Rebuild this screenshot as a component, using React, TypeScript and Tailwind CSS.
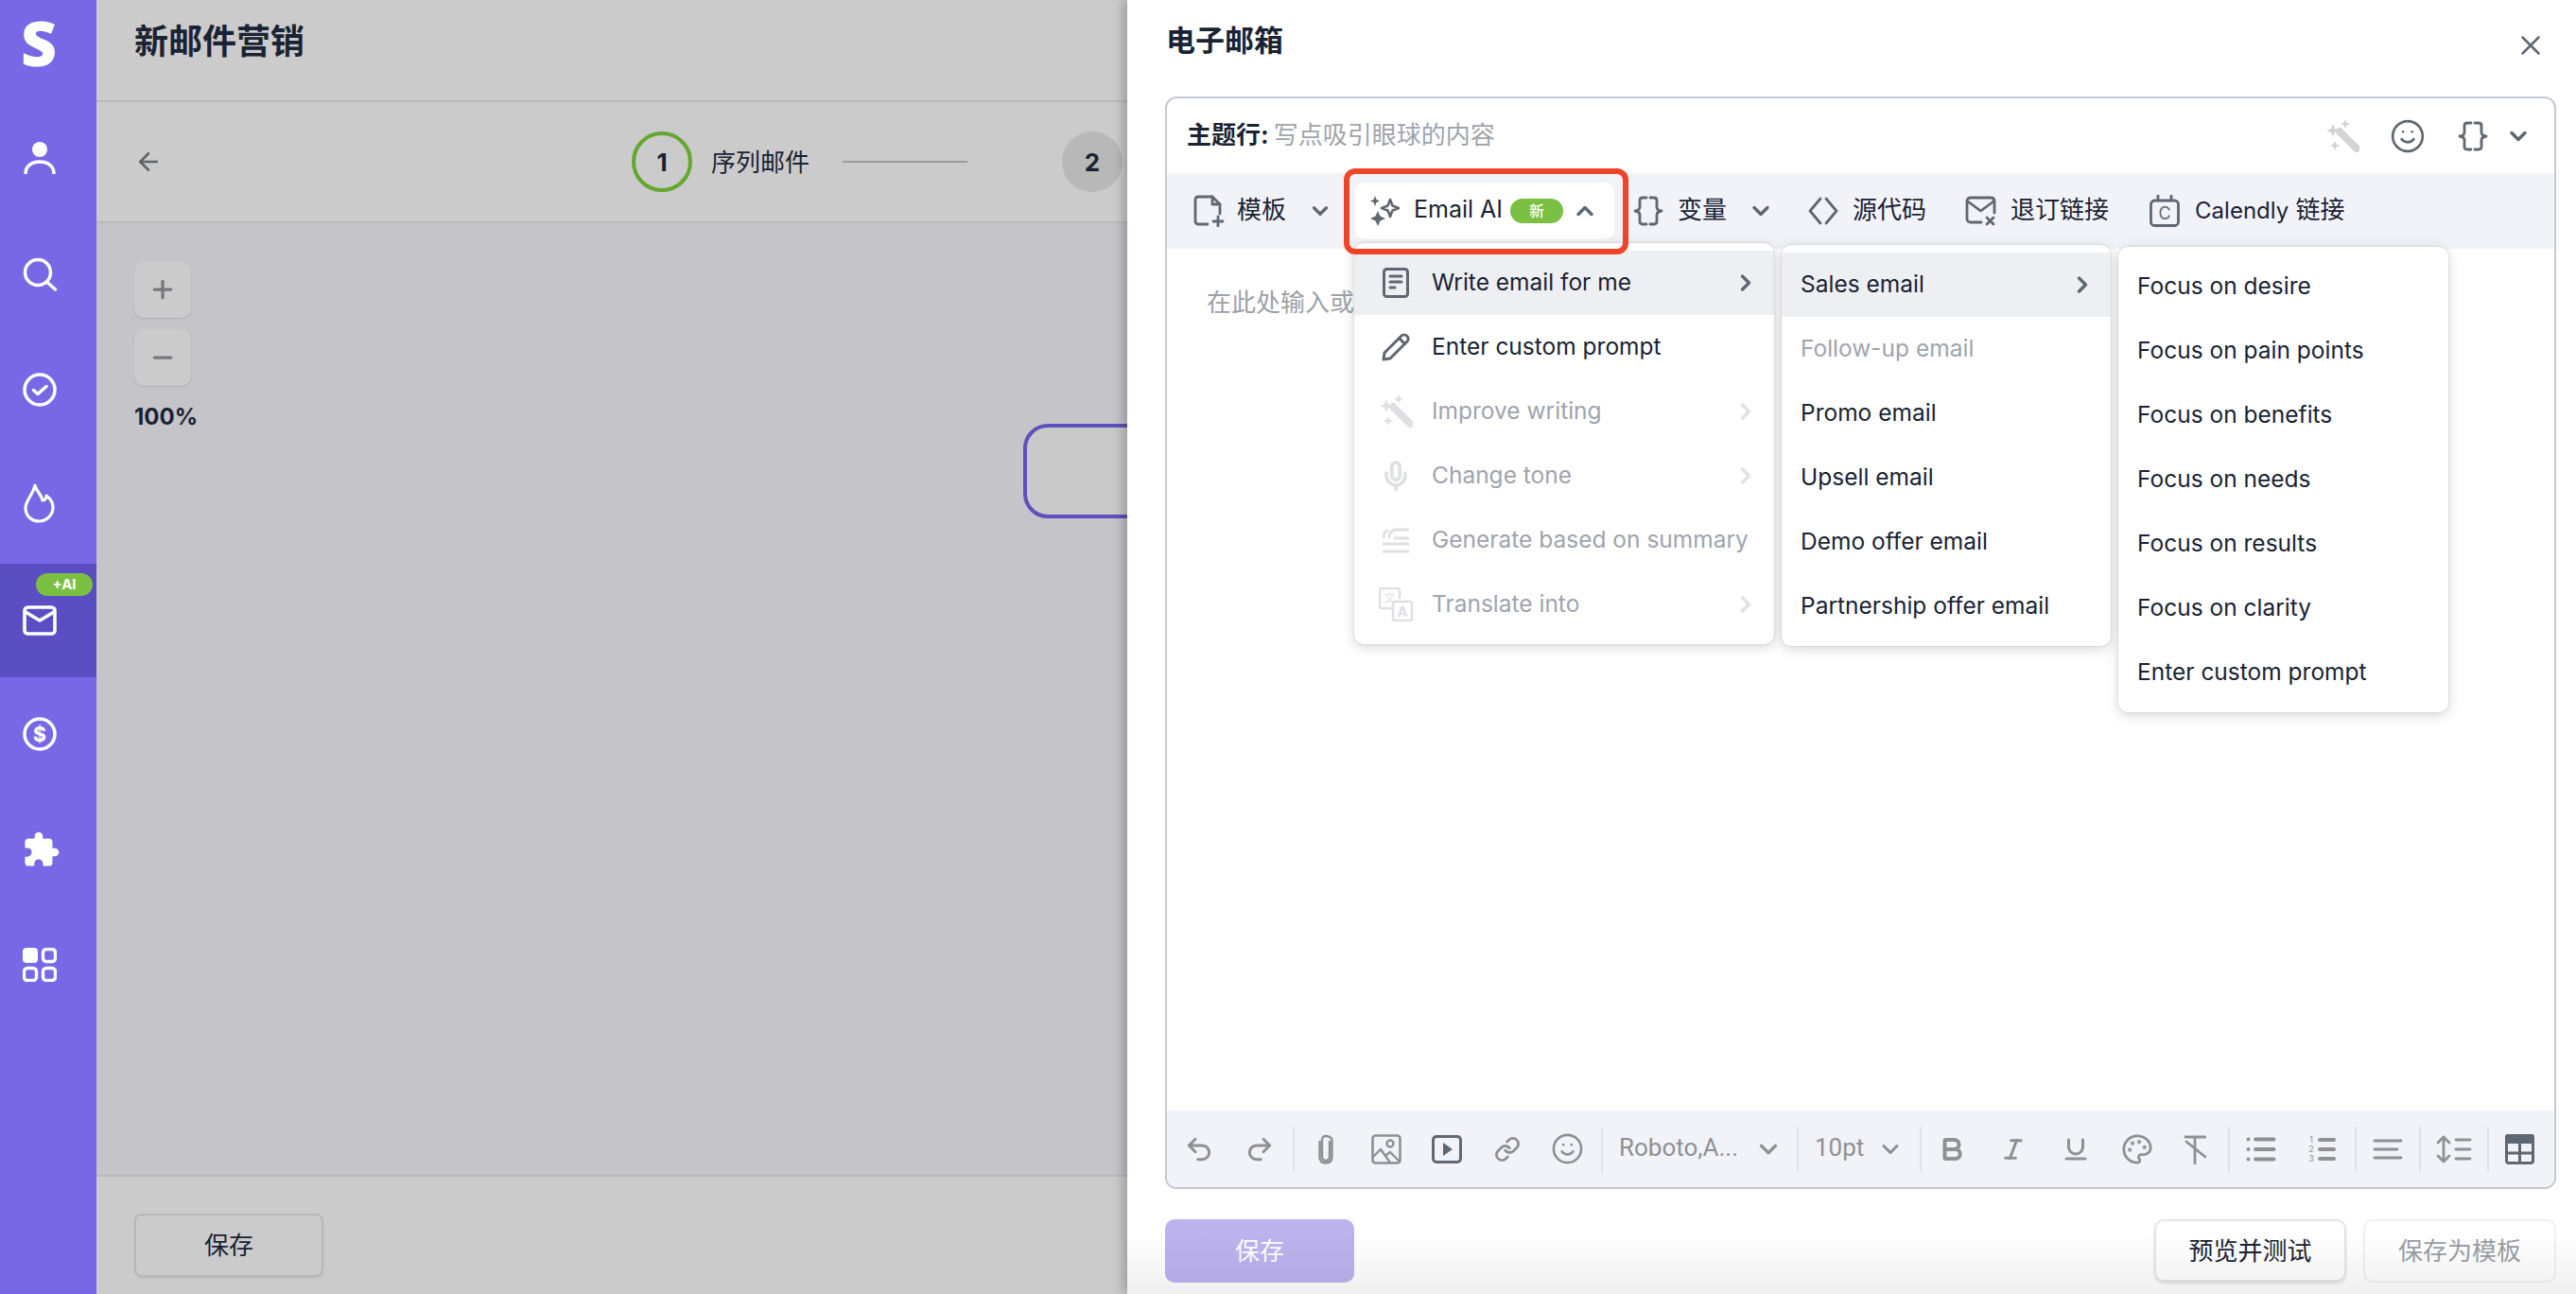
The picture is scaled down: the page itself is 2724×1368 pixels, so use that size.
import type { ReactNode } from "react";
import {
  ArrowLeft,
  Bold,
  ChevronDown,
  ChevronRight,
  ChevronUp,
  Italic,
  Link,
  List,
  Mic,
  Minus,
  Palette,
  Plus,
  Redo2,
  Smile,
  Underline,
  Undo2,
  X,
} from "lucide-react";

const font = "font-['Inter','Noto_Sans_CJK_SC',sans-serif]";

function Svg({ w, h, vb, children, className }: { w: number; h: number; vb?: string; children: ReactNode; className?: string }) {
  return (
    <svg
      width={w}
      height={h}
      viewBox={vb ?? `0 0 ${w} ${h}`}
      fill="none"
      stroke="currentColor"
      strokeLinecap="round"
      strokeLinejoin="round"
      className={`shrink-0 ${className ?? ""}`}
    >
      {children}
    </svg>
  );
}

/* sidebar */
function NavItem({ children, active, badge }: { children: ReactNode; active?: boolean; badge?: boolean }) {
  return (
    <div className={`relative flex items-center pl-[24px] text-white ${active ? "h-[120px] bg-[#5b4ec2]" : "h-[122px]"}`}>
      {badge && (
        <span className="absolute left-[38px] top-[10px] h-[24px] w-[60px] rounded-full bg-[#7bc043] text-center text-[15px] leading-[24px] font-bold text-white">
          +AI
        </span>
      )}
      {children}
    </div>
  );
}

function Sidebar() {
  return (
    <div className="w-[102px] shrink-0 bg-[#7868e6]">
      <div className="h-[108px] pl-[22px] pt-[5px] text-[66px] leading-[78px] font-extrabold text-white font-['Open_Sans',sans-serif]">S</div>
      <NavItem>
        <Svg w={36} h={38} className="mt-[-4px]">
          <circle cx="18" cy="10" r="8" fill="currentColor" stroke="none" />
          <path d="M3 36C3 27 10 23 18 23S33 27 33 36" strokeWidth="3.5" strokeLinecap="butt" />
        </Svg>
      </NavItem>
      <NavItem>
        <Svg w={38} h={38} className="mt-[-2px]">
          <circle cx="16" cy="17" r="13.5" strokeWidth="3.5" />
          <path d="M26 27.5L34.5 35" strokeWidth="3.5" />
        </Svg>
      </NavItem>
      <NavItem>
        <Svg w={36} h={36} className="mt-[-3px]">
          <circle cx="18" cy="18" r="16" strokeWidth="3.5" />
          <path d="M11.5 18.5L16 22.5L25 14.5" strokeWidth="3.5" />
        </Svg>
      </NavItem>
      <NavItem>
        <Svg w={34} h={42} className="ml-[1px] mt-[-6px]">
          <path d="M12 2C13 8 19 12 20 18C22 18 24 16 24 13C28 16 31 20 31 25C31 34 24 40 16 40C8 40 2 34 2 26C2 18 10 12 12 2Z" strokeWidth="3.2" />
        </Svg>
      </NavItem>
      <NavItem active badge>
        <Svg w={36} h={32}>
          <rect x="2" y="2" width="32" height="28" rx="3.5" strokeWidth="3.6" />
          <path d="M3 7L18 16L33 7" strokeWidth="3.6" />
        </Svg>
      </NavItem>
      <NavItem>
        <Svg w={36} h={36} className="mt-[-2px]">
          <circle cx="18" cy="18" r="16" strokeWidth="3.5" />
          <text x="18" y="25.5" textAnchor="middle" fontSize="21" fontWeight="800" fill="currentColor" stroke="none" fontFamily="Inter">$</text>
        </Svg>
      </NavItem>
      <NavItem>
        <svg width="41" height="41" viewBox="0 0 24 24" fill="currentColor" className="ml-[-1px] mt-[-2px]">
          <path d="M20.5 11H19V7c0-1.1-.9-2-2-2h-4V3.5C13 2.12 11.88 1 10.5 1S8 2.12 8 3.5V5H4c-1.1 0-1.99.9-1.99 2v3.8H3.5c1.49 0 2.7 1.21 2.7 2.7s-1.21 2.7-2.7 2.7H2V20c0 1.1.9 2 2 2h3.8v-1.5c0-1.49 1.21-2.7 2.7-2.7 1.49 0 2.7 1.21 2.7 2.7V22H17c1.1 0 2-.9 2-2v-4h1.5c1.38 0 2.5-1.12 2.5-2.5S21.88 11 20.5 11z" />
        </svg>
      </NavItem>
      <NavItem>
        <Svg w={36} h={36} className="mt-[-3px]">
          <rect x="0" y="0" width="16" height="16" rx="4" fill="currentColor" stroke="none" />
          <rect x="21.5" y="1.5" width="13" height="13" rx="3.5" strokeWidth="3.4" />
          <rect x="1.5" y="21.5" width="13" height="13" rx="3.5" strokeWidth="3.4" />
          <rect x="21.5" y="21.5" width="13" height="13" rx="3.5" strokeWidth="3.4" />
        </Svg>
      </NavItem>
    </div>
  );
}

/* dimmed page behind the panel */
function ZoomButton({ children }: { children: ReactNode }) {
  return (
    <div className="flex h-[60px] w-[60px] items-center justify-center rounded-[10px] bg-[#cbcbcb] text-[#76787d] shadow-[0_1px_2px_rgba(0,0,0,0.12)]">
      {children}
    </div>
  );
}

function Main() {
  return (
    <div className="flex w-[1090px] shrink-0 flex-col overflow-hidden bg-[#cbcbcb] text-[#1a2333]">
      <div className="flex h-[108px] shrink-0 items-center whitespace-nowrap border-b-2 border-[#b9b9b9] pl-[40px] pb-[18px] text-[36px] font-bold">新邮件营销</div>
      <div className="flex h-[128px] shrink-0 items-center border-b-2 border-[#b9b9b9] pl-[40px]">
        <ArrowLeft size={30} strokeWidth={2} className="text-[#5f6368]" />
        <div className="ml-[496px] flex h-[64px] w-[64px] shrink-0 items-center justify-center rounded-full border-[4px] border-[#64a62e] text-[26px] font-bold">1</div>
        <span className="ml-[20px] whitespace-nowrap text-[26px]">序列邮件</span>
        <div className="ml-[35px] h-[2px] w-[132px] shrink-0 bg-[#9c9c9c]" />
        <div className="ml-[100px] flex h-[64px] w-[64px] shrink-0 items-center justify-center rounded-full bg-[#b8b8b8] text-[26px] font-bold">2</div>
      </div>
      <div className="relative flex-1 bg-[#c5c4c9] pl-[40px] pt-[40px]">
        <ZoomButton><Plus size={30} strokeWidth={2.6} /></ZoomButton>
        <div className="mt-[12px]"><ZoomButton><Minus size={30} strokeWidth={2.6} /></ZoomButton></div>
        <div className="mt-[18px] text-[24px] leading-[30px] font-bold">100%</div>
        <div className="absolute left-[980px] top-[212px] h-[100px] w-[200px] rounded-[26px] border-[4px] border-[#5f51bd] bg-[#c9c9c9]" />
      </div>
      <div className="h-[126px] shrink-0 border-t-2 border-[#b9b9b9] pl-[40px] pt-[39px]">
        <div className="flex h-[67px] w-[200px] items-center justify-center rounded-[8px] border-2 border-[#b7b7b7] text-[26px] shadow-[0_1px_2px_rgba(0,0,0,0.1)]">保存</div>
      </div>
    </div>
  );
}

/* dropdown */
function MenuRow({ icon, label, arrow, active, disabled }: { icon?: ReactNode; label: string; arrow?: boolean; active?: boolean; disabled?: boolean }) {
  return (
    <div className={`flex h-[68px] items-center text-[24.5px] ${active ? "bg-[#eeeff3]" : ""} ${disabled ? "text-[#a0a4ad]" : "text-[#1a2333]"}`}>
      {icon && <div className={`flex w-[82px] shrink-0 justify-center pl-[6px] ${disabled ? "text-[#dfe0e3]" : "text-[#5f6772]"}`}>{icon}</div>}
      <span className={`whitespace-nowrap pb-[2px] ${icon ? "" : "pl-[20px]"}`}>{label}</span>
      {arrow && <ChevronRight size={28} strokeWidth={3} className={`ml-auto mr-[16px] ${disabled ? "text-[#dfe0e3]" : "text-[#5f6772]"}`} />}
    </div>
  );
}

function Menu({ className, children }: { className: string; children: ReactNode }) {
  return (
    <div className={`absolute z-10 rounded-[10px] bg-white py-[8px] shadow-[0_3px_14px_rgba(0,0,0,0.16),0_0_2px_rgba(0,0,0,0.2)] ${className}`}>
      {children}
    </div>
  );
}

function WandIcon() {
  return (
    <Svg w={36} h={36}>
      <path d="M15 13L33 31" strokeWidth="8" />
      <path d="M8 5L10 10L15 12L10 14L8 19L6 14L1 12L6 10Z" fill="currentColor" stroke="none" />
      <path d="M21 0L22.5 3.5L26 5L22.5 6.5L21 10L19.5 6.5L16 5L19.5 3.5Z" fill="currentColor" stroke="none" />
      <path d="M10 23L11.5 26.5L15 28L11.5 29.5L10 33L8.5 29.5L5 28L8.5 26.5Z" fill="currentColor" stroke="none" />
    </Svg>
  );
}

function Menus() {
  return (
    <>
      <Menu className="left-[198px] top-[153px] w-[444px]">
        <MenuRow
          active
          arrow
          label="Write email for me"
          icon={
            <Svg w={28} h={32}>
              <rect x="1.5" y="1.5" width="25" height="29" rx="3" strokeWidth="3" />
              <path d="M8 9H20M8 15H20M8 21H13" strokeWidth="3" />
            </Svg>
          }
        />
        <MenuRow
          label="Enter custom prompt"
          icon={
            <Svg w={30} h={30}>
              <path d="M2 28L3 21L21 3C22.5 1.5 25 1.5 26.5 3L27 3.5C28.5 5 28.5 7.5 27 9L9 27Z" strokeWidth="3" />
              <path d="M18.5 5.5L24.5 11.5" strokeWidth="3" />
            </Svg>
          }
        />
        <MenuRow disabled arrow label="Improve writing" icon={<WandIcon />} />
        <MenuRow disabled arrow label="Change tone" icon={<Mic size={34} strokeWidth={2.6} />} />
        <MenuRow
          disabled
          label="Generate based on summary"
          icon={
            <Svg w={28} h={28}>
              <path d="M12 3H27M13 12H27M1 18H27M1 26H27" strokeWidth="3" />
              <path d="M1 11C1 7 3 5 5 4M7 11C7 7 9 5 11 4" strokeWidth="3" />
            </Svg>
          }
        />
        <MenuRow
          disabled
          arrow
          label="Translate into"
          icon={
            <Svg w={36} h={36}>
              <path d="M14 22H3C2 22 1 21 1 20V3C1 2 2 1 3 1H20C21 1 22 2 22 3V11" strokeWidth="2.6" />
              <rect x="15" y="15" width="20" height="20" rx="2" strokeWidth="2.6" />
              <text x="25" y="31" textAnchor="middle" fontSize="15" fontWeight="700" fill="currentColor" stroke="none" fontFamily="Inter">A</text>
              <text x="11.5" y="16" textAnchor="middle" fontSize="12" fill="currentColor" stroke="none" fontFamily="Noto Sans CJK SC">文</text>
            </Svg>
          }
        />
      </Menu>
      <Menu className="left-[650px] top-[155px] w-[348px]">
        <MenuRow active arrow label="Sales email" />
        <MenuRow disabled label="Follow-up email" />
        <MenuRow label="Promo email" />
        <MenuRow label="Upsell email" />
        <MenuRow label="Demo offer email" />
        <MenuRow label="Partnership offer email" />
      </Menu>
      <Menu className="left-[1006px] top-[157px] w-[349px]">
        <MenuRow label="Focus on desire" />
        <MenuRow label="Focus on pain points" />
        <MenuRow label="Focus on benefits" />
        <MenuRow label="Focus on needs" />
        <MenuRow label="Focus on results" />
        <MenuRow label="Focus on clarity" />
        <MenuRow label="Enter custom prompt" />
      </Menu>
      <div className="absolute left-[187px] top-[74px] z-20 h-[91px] w-[301px] rounded-[12px] border-[6px] border-[#ee4428]" />
    </>
  );
}

function BracesIcon() {
  return (
    <Svg w={32} h={32}>
      <path d="M14 2H10C8 2 7 3 7 5V12C7 14 5 15.5 2 16C5 16.5 7 18 7 20V27C7 29 8 30 10 30H14" strokeWidth="2.8" />
      <path d="M18 2H22C24 2 25 3 25 5V12C25 14 27 15.5 30 16C27 16.5 25 18 25 20V27C25 29 24 30 22 30H18" strokeWidth="2.8" />
    </Svg>
  );
}

function SubjectRow() {
  return (
    <div className="flex h-[79px] shrink-0 items-center pl-[21px] text-[26px]">
      <span className="pb-[3px] font-bold text-[#1a2333]">主题行:</span>
      <span className="ml-[5px] pb-[3px] text-[#a0a4ab]">写点吸引眼球的内容</span>
      <div className="ml-auto mr-[24px] flex items-center text-[#5f6772]">
        <div className="text-[#d3d4d7]"><WandIcon /></div>
        <Smile size={38} strokeWidth={1.7} className="ml-[32px]" />
        <div className="ml-[34px]"><BracesIcon /></div>
        <ChevronDown size={28} strokeWidth={3} className="ml-[18px]" />
      </div>
    </div>
  );
}

function TopToolbar() {
  return (
    <div className="flex h-[80px] shrink-0 items-center bg-[#f2f3f9] pl-[28px] text-[26px] text-[#1a2333]">
      <div className="text-[#5f6772]">
        <Svg w={33} h={34}>
          <path d="M15 31H5C3 31 2 30 2 28V5C2 3 3 2 5 2H20L28 10V20" strokeWidth="2.8" />
          <path d="M20 2V10H28" strokeWidth="2.8" />
          <path d="M26 23V33M21 28H31" strokeWidth="2.8" />
        </Svg>
      </div>
      <span className="ml-[13px] pb-[3px]">模板</span>
      <ChevronDown size={26} strokeWidth={3} className="ml-[23px] text-[#5f6772]" />
      <div className="ml-[24px] flex h-[60px] w-[274px] items-center rounded-[10px] bg-white pl-[16px]">
        <div className="text-[#5f6772]">
          <Svg w={33} h={34}>
            <path d="M21 5L23.5 11.5L30 14L23.5 16.5L21 23L18.5 16.5L12 14L18.5 11.5Z" strokeWidth="2.6" />
            <path d="M5 1L6.5 5L10 6.5L6.5 8L5 12L3.5 8L0 6.5L3.5 5Z" fill="currentColor" stroke="none" />
            <path d="M8 17L10.5 22.5L16 25L10.5 27.5L8 33L5.5 27.5L0 25L5.5 22.5Z" fill="currentColor" stroke="none" />
          </Svg>
        </div>
        <span className="ml-[13px] pb-[2px] text-[25px] whitespace-nowrap">Email AI</span>
        <span className="ml-[8px] flex h-[26px] w-[56px] items-center justify-center rounded-full bg-[#7bc043] text-[16px] font-medium text-white">新</span>
        <ChevronUp size={28} strokeWidth={3} className="ml-[9px] text-[#5f6772]" />
      </div>
      <div className="ml-[20px] text-[#5f6772]"><BracesIcon /></div>
      <span className="ml-[15px] pb-[3px]">变量</span>
      <ChevronDown size={28} strokeWidth={3} className="ml-[22px] text-[#5f6772]" />
      <div className="ml-[36px] text-[#5f6772]">
        <Svg w={32} h={30}>
          <path d="M13 2L2 15L13 28M19 2L30 15L19 28" strokeWidth="2.8" />
        </Svg>
      </div>
      <span className="ml-[15px] whitespace-nowrap pb-[3px]">源代码</span>
      <div className="ml-[41px] text-[#5f6772]">
        <Svg w={33} h={32}>
          <path d="M17 28H6C3.5 28 2 26.5 2 24V6C2 3.5 3.5 2 6 2H27C29.5 2 31 3.5 31 6V18" strokeWidth="2.8" />
          <path d="M3 6L16.5 16L30 6" strokeWidth="2.8" />
          <path d="M23 23L30 30M30 23L23 30" strokeWidth="2.8" />
        </Svg>
      </div>
      <span className="ml-[15px] whitespace-nowrap pb-[3px]">退订链接</span>
      <div className="ml-[43px] text-[#5f6772]">
        <Svg w={32} h={34}>
          <rect x="1.5" y="6" width="29" height="26.5" rx="4" strokeWidth="2.8" />
          <path d="M9 1V6M23 1V6" strokeWidth="2.8" />
          <text x="16" y="26" textAnchor="middle" fontSize="18" fill="currentColor" stroke="none" fontFamily="Inter">C</text>
        </Svg>
      </div>
      <span className="ml-[16px] whitespace-nowrap pb-[3px]"><span className="text-[24px]">Calendly</span> 链接</span>
    </div>
  );
}

function Sep({ className }: { className: string }) {
  return <div className={`h-[48px] w-[2px] shrink-0 bg-[#e1e2e6] ${className}`} />;
}

function BottomToolbar() {
  return (
    <div className="flex h-[81px] shrink-0 items-center rounded-b-[10px] bg-[#f2f3f9] pl-[18px] text-[#8f9092]">
      <Undo2 size={32} strokeWidth={2.2} />
      <Redo2 size={32} strokeWidth={2.2} className="ml-[32px]" />
      <Sep className="ml-[19px]" />
      <Svg w={18} h={32} className="ml-[24px]">
        <path d="M13 8V23C13 26 11.5 28 9 28S5 26 5 23V6C5 3.5 6.5 2 9 2S15.500 3.500 15.500 6V24C15.500 28 13 30.500 9 30.500S2.500 28 2.500 24V8" strokeWidth="2.4" />
      </Svg>
      <Svg w={32} h={32} className="ml-[39px]">
        <rect x="1.5" y="1.5" width="29" height="29" rx="3" strokeWidth="2.6" />
        <circle cx="20" cy="10" r="3.500" strokeWidth="2.4" />
        <path d="M2 24L10 16L20 30M16 22L20 19L30 29" strokeWidth="2.4" />
      </Svg>
      <Svg w={32} h={30} className="ml-[32px] text-[#5f6772]">
        <rect x="1.500" y="1.500" width="29" height="27" rx="3.500" strokeWidth="3" />
        <path d="M12 8L22 15L12 22Z" fill="currentColor" stroke="none" />
      </Svg>
      <Link size={28} strokeWidth={2.4} className="ml-[34px]" />
      <Smile size={35} strokeWidth={1.8} className="ml-[32px]" />
      <Sep className="ml-[18px]" />
      <span className="ml-[17px] w-[121px] shrink-0 whitespace-nowrap pb-[2px] font-['Roboto',sans-serif] text-[26px] text-[#8f9092]">Roboto,A...</span>
      <ChevronDown size={30} strokeWidth={2.6} className="ml-[22px]" />
      <Sep className="ml-[15px]" />
      <span className="ml-[17px] w-[52px] shrink-0 pb-[2px] font-['Roboto',sans-serif] text-[26px]">10pt</span>
      <ChevronDown size={28} strokeWidth={2.6} className="ml-[14px]" />
      <Sep className="ml-[17px]" />
      <Bold size={30} strokeWidth={3.2} className="ml-[17px]" />
      <Italic size={28} strokeWidth={2.6} className="ml-[36px]" />
      <Underline size={30} strokeWidth={2.4} className="ml-[37px]" />
      <Palette size={34} strokeWidth={2} className="ml-[33px]" />
      <Svg w={24} h={32} className="ml-[32px]">
        <path d="M2 3H23M12 3V31M3 8L23 24" strokeWidth="2.8" />
      </Svg>
      <Sep className="ml-[23px]" />
      <List size={36} strokeWidth={2.6} className="ml-[15px]" />
      <Svg w={29} h={32} className="ml-[32px]">
        <path d="M12 6H27M12 16H27M12 26H27" strokeWidth="4" />
        <text x="3" y="9" textAnchor="middle" fontSize="9" fill="currentColor" stroke="none" fontFamily="Inter">1</text>
        <text x="3" y="19" textAnchor="middle" fontSize="9" fill="currentColor" stroke="none" fontFamily="Inter">2</text>
        <text x="3" y="29" textAnchor="middle" fontSize="9" fill="currentColor" stroke="none" fontFamily="Inter">3</text>
      </Svg>
      <Sep className="ml-[20px]" />
      <Svg w={32} h={24} className="ml-[17px]">
        <path d="M2 3H30M2 12H26M2 21H30" strokeWidth="2.8" />
      </Svg>
      <Sep className="ml-[17px]" />
      <Svg w={38} h={32} className="ml-[16px]">
        <path d="M8 3V29M2 9L8 3L14 9M2 23L8 29L14 23" strokeWidth="2.8" />
        <path d="M21 6H36M21 16H36M21 26H36" strokeWidth="2.8" />
      </Svg>
      <Sep className="ml-[16px]" />
      <Svg w={31} h={32} className="ml-[17px] text-[#5f6772]">
        <path d="M3 0H28C30 0 31 1 31 3V10H0V3C0 1 1 0 3 0Z" fill="currentColor" stroke="none" />
        <rect x="1.500" y="1.500" width="28" height="29" rx="2.500" strokeWidth="3" />
        <path d="M1.500 20H29.500M15.500 9V30" strokeWidth="3" />
      </Svg>
    </div>
  );
}

function Panel() {
  return (
    <div className="relative z-10 flex min-w-0 flex-1 flex-col bg-white shadow-[-5px_0_10px_rgba(0,0,0,0.22)]">
      <div className="flex h-[102px] shrink-0 pl-[41px] pt-[22px]">
        <span className="text-[31px] leading-[42px] font-bold text-[#1a2333]">电子邮箱</span>
        <X size={34} strokeWidth={1.8} className="ml-auto mr-[31px] mt-[9px] text-[#5f6772]" />
      </div>
      <div className="relative ml-[40px] flex h-[1155px] w-[1471px] shrink-0 flex-col rounded-[12px] border-2 border-[#c5c9d2]">
        <SubjectRow />
        <TopToolbar />
        <div className="flex-1 pl-[42px] pt-[39px] text-[26px] leading-[36px] text-[#9da1a8]">在此处输入或</div>
        <BottomToolbar />
        <Menus />
      </div>
      <div className="ml-[40px] mt-[32px] flex w-[1471px] items-start text-[26px]">
        <div className="flex h-[67px] w-[200px] items-center justify-center rounded-[10px] bg-[#bcb3ee] text-white">保存</div>
        <div className="ml-auto flex h-[66px] w-[203px] items-center justify-center rounded-[10px] border-2 border-[#e5e5e5] text-[#1a2333] shadow-[0_2px_3px_rgba(0,0,0,0.12)]">预览并测试</div>
        <div className="ml-[18px] flex h-[67px] w-[204px] items-center justify-center rounded-[10px] border-2 border-[#eff0f2] text-[#9a9ea6]">保存为模板</div>
      </div>
      <div className="pointer-events-none absolute inset-x-0 bottom-0 h-[64px] bg-gradient-to-b from-transparent to-black/[0.06]" />
    </div>
  );
}

export default function App() {
  return (
    <div className={`flex h-[1368px] w-[2724px] overflow-hidden ${font}`}>
      <Sidebar />
      <Main />
      <Panel />
    </div>
  );
}
